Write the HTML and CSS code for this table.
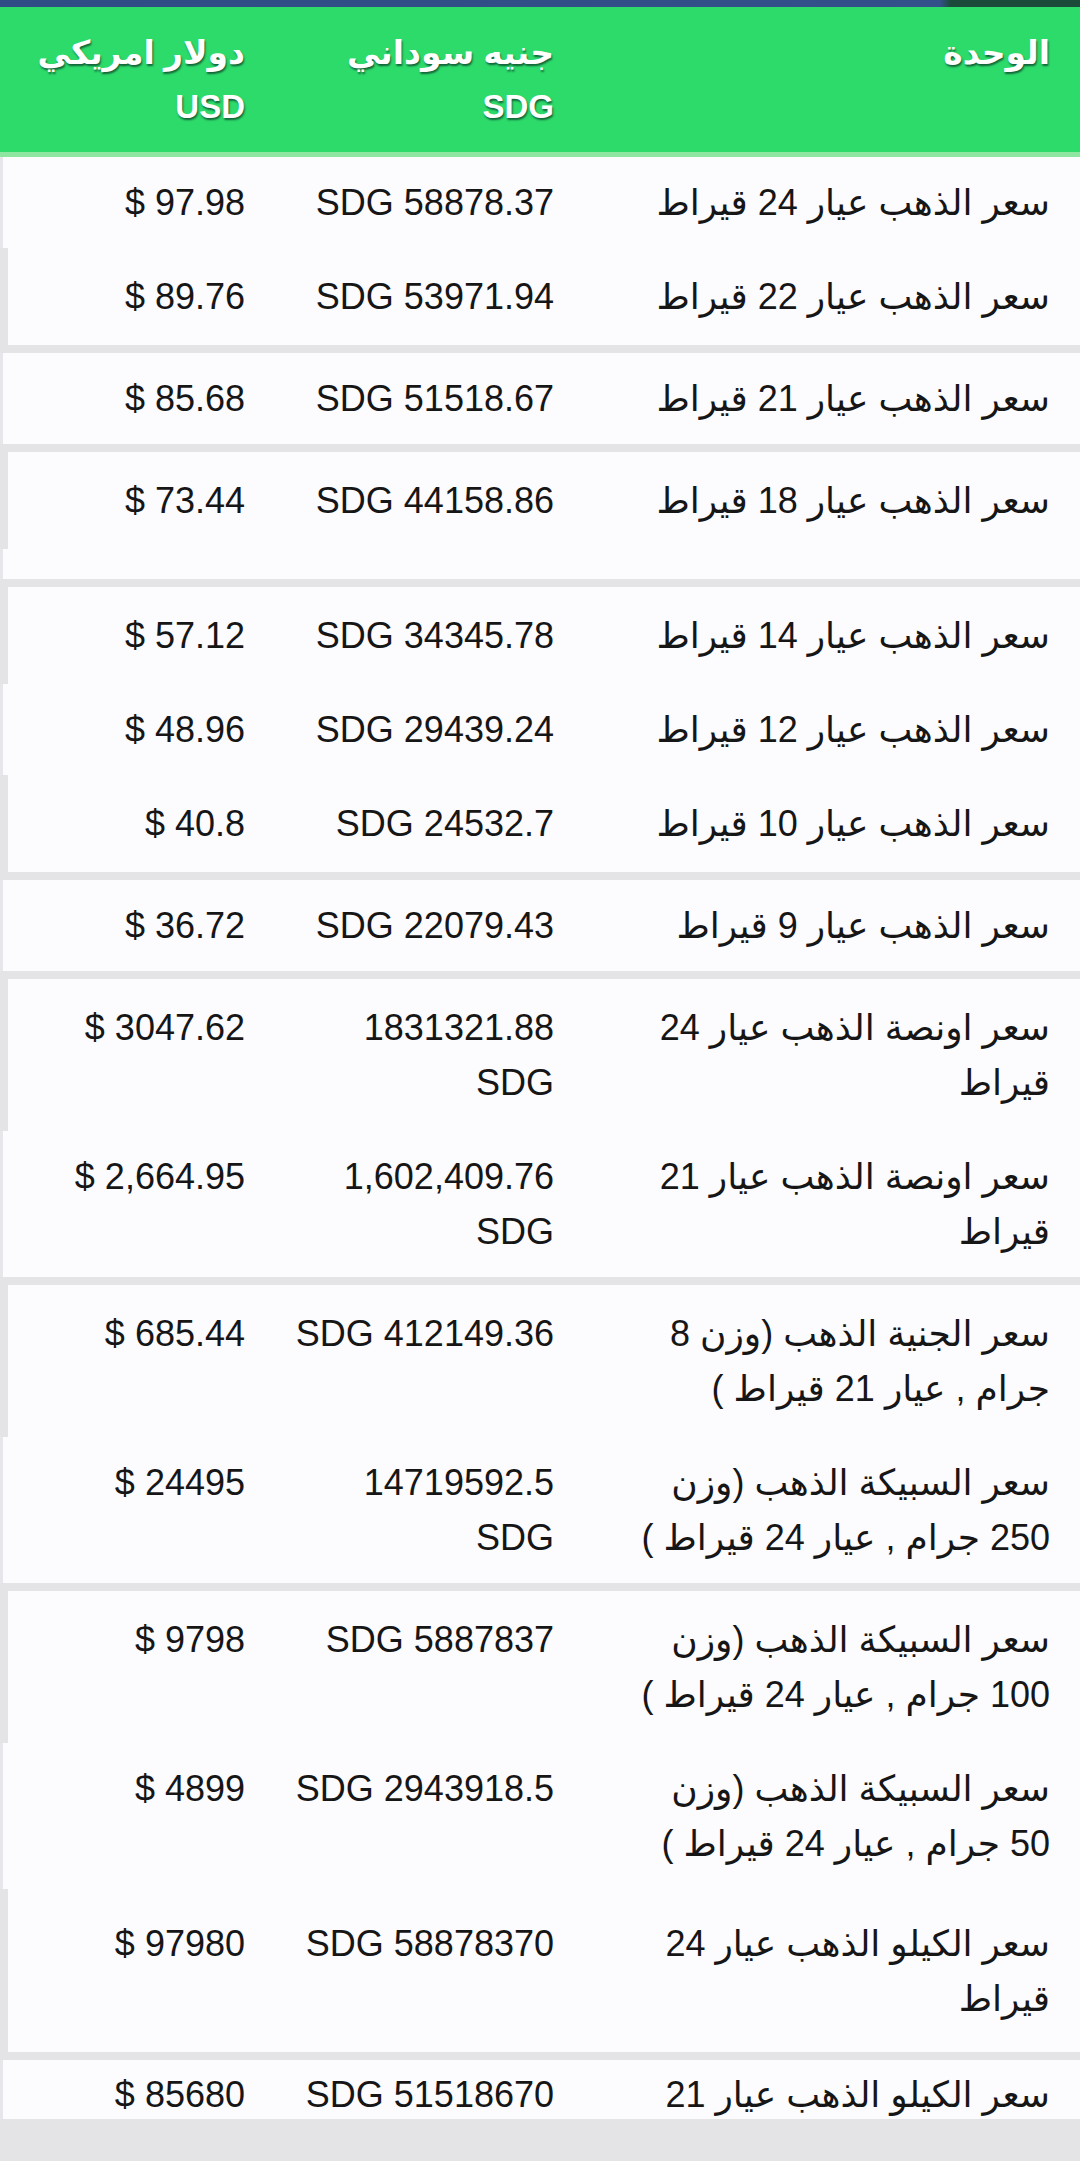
FILE: index.html
```html
<!DOCTYPE html>
<html lang="ar">
<head>
<meta charset="utf-8">
<title>سعر الذهب</title>
<link rel="stylesheet" href="styles.css">
</head>
<body>
<div class="screen">
  <div class="topbar"></div>
  <div class="table">
    <div class="head">
      <div class="cell">الوحدة</div>
      <div class="cell">جنيه سوداني<br>SDG</div>
      <div class="cell">دولار امريكي<br>USD</div>
    </div>

    <div class="row a">
      <div class="cell">سعر الذهب عيار 24 قيراط</div>
      <div class="cell">58878.37 SDG</div>
      <div class="cell">97.98 $</div>
    </div>
    <div class="row b">
      <div class="cell">سعر الذهب عيار 22 قيراط</div>
      <div class="cell">53971.94 SDG</div>
      <div class="cell">89.76 $</div>
    </div>
    <div class="row a sep">
      <div class="cell">سعر الذهب عيار 21 قيراط</div>
      <div class="cell">51518.67 SDG</div>
      <div class="cell">85.68 $</div>
    </div>
    <div class="row b sep">
      <div class="cell">سعر الذهب عيار 18 قيراط</div>
      <div class="cell">44158.86 SDG</div>
      <div class="cell">73.44 $</div>
    </div>
    <div class="row a empty"></div>
    <div class="row b sep">
      <div class="cell">سعر الذهب عيار 14 قيراط</div>
      <div class="cell">34345.78 SDG</div>
      <div class="cell">57.12 $</div>
    </div>
    <div class="row a">
      <div class="cell">سعر الذهب عيار 12 قيراط</div>
      <div class="cell">29439.24 SDG</div>
      <div class="cell">48.96 $</div>
    </div>
    <div class="row b">
      <div class="cell">سعر الذهب عيار 10 قيراط</div>
      <div class="cell">24532.7 SDG</div>
      <div class="cell">40.8 $</div>
    </div>
    <div class="row a sep">
      <div class="cell">سعر الذهب عيار 9 قيراط</div>
      <div class="cell">22079.43 SDG</div>
      <div class="cell">36.72 $</div>
    </div>
    <div class="row b sep">
      <div class="cell">سعر اونصة الذهب عيار 24 قيراط</div>
      <div class="cell">1831321.88 SDG</div>
      <div class="cell">3047.62 $</div>
    </div>
    <div class="row a">
      <div class="cell">سعر اونصة الذهب عيار 21 قيراط</div>
      <div class="cell">1,602,409.76 SDG</div>
      <div class="cell">2,664.95 $</div>
    </div>
    <div class="row b sep">
      <div class="cell">سعر الجنية الذهب (وزن 8 جرام , عيار 21 قيراط )</div>
      <div class="cell">412149.36 SDG</div>
      <div class="cell">685.44 $</div>
    </div>
    <div class="row a">
      <div class="cell">سعر السبيكة الذهب (وزن 250 جرام , عيار 24 قيراط )</div>
      <div class="cell">14719592.5 SDG</div>
      <div class="cell">24495 $</div>
    </div>
    <div class="row b sep">
      <div class="cell">سعر السبيكة الذهب (وزن 100 جرام , عيار 24 قيراط )</div>
      <div class="cell">5887837 SDG</div>
      <div class="cell">9798 $</div>
    </div>
    <div class="row a">
      <div class="cell">سعر السبيكة الذهب (وزن 50 جرام , عيار 24 قيراط )</div>
      <div class="cell">2943918.5 SDG</div>
      <div class="cell">4899 $</div>
    </div>
    <div class="row b tall">
      <div class="cell">سعر الكيلو الذهب عيار 24 قيراط</div>
      <div class="cell">58878370 SDG</div>
      <div class="cell">97980 $</div>
    </div>
    <div class="row a sep last">
      <div class="cell">سعر الكيلو الذهب عيار 21 قيراط</div>
      <div class="cell">51518670 SDG</div>
      <div class="cell">85680 $</div>
    </div>
  </div>
</div>
</body>
</html>
```

FILE: styles.css
```css
* {
  box-sizing: border-box;
}

html,
body {
  margin: 0;
  padding: 0;
}

body {
  background: #e4e3e6;
  font-family: "Liberation Sans", "DejaVu Sans", sans-serif;
}

.screen {
  height: 2119px;
  overflow: hidden;
}

.topbar {
  height: 7px;
  background: linear-gradient(to right, #2f4c84 0%, #34508a 87%, #1c4a3a 88%, #1c4a3a 100%);
}

.table {
  direction: rtl;
}

.head,
.row {
  display: grid;
  grid-template-columns: 496px 309px 1fr;
}

.head {
  background: #2ddb6b;
  color: #ffffff;
  font-weight: bold;
  font-size: 33px;
  line-height: 54px;
  padding: 19px 0 18px;
  text-shadow: 1px 2px 2px rgba(10, 60, 40, 0.75);
  border-bottom: 5px solid #8fe6a0;
}

.cell {
  text-align: right;
}

.cell:nth-child(1) {
  padding-right: 30px;
  padding-left: 56px;
}

.cell:nth-child(2) {
  padding-right: 30px;
  padding-left: 13px;
}

.cell:nth-child(3) {
  padding-right: 30px;
  padding-left: 8px;
}

.row {
  background: #fcfbfe;
  color: #161616;
  font-size: 36px;
  line-height: 55px;
}

.a {
  padding: 18px 0;
  border-left: 3px solid #e7e6ea;
}

.b {
  padding: 21px 0;
  margin-left: 8px;
}

.tall {
  padding-top: 27px;
  padding-bottom: 26px;
}

.sep {
  margin-top: 8px;
}

.last {
  padding-top: 7px;
}

.empty {
  height: 30px;
  padding: 0;
}
```
